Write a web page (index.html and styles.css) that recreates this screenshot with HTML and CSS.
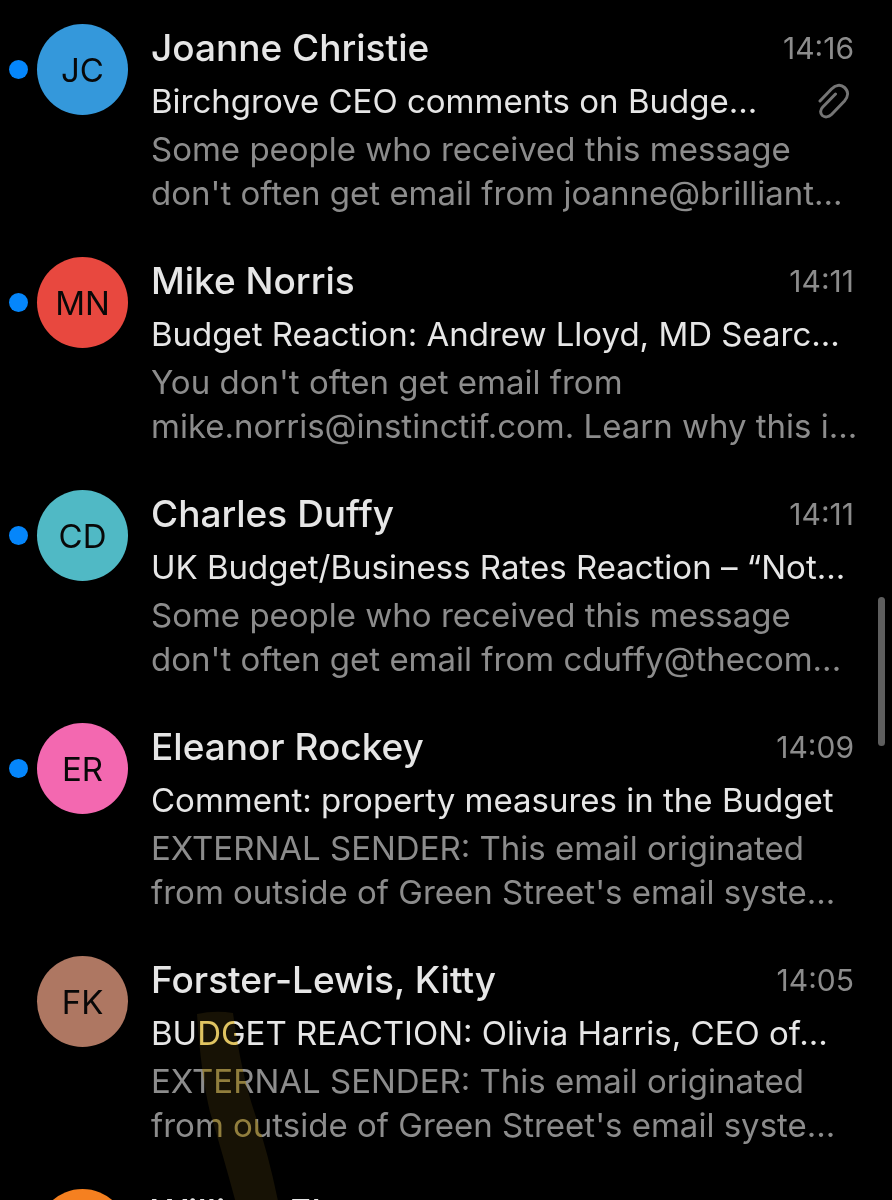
FILE: index.html
```html
<!DOCTYPE html>
<html lang="en">
<head>
<meta charset="utf-8">
<meta name="viewport" content="width=device-width, initial-scale=1">
<title>Inbox</title>
<link rel="stylesheet" href="styles.css">
</head>
<body>
<main class="inbox">
  <ul class="messages">
    <li class="message">
      <span class="unread"></span>
      <span class="avatar avatar-blue">JC</span>
      <article class="body">
        <header class="top"><h2 class="sender">Joanne Christie</h2><time class="time">14:16</time></header>
        <div class="subject-row">
          <p class="subject">Birchgrove CEO comments on Budge...</p>
          <svg class="clip" viewBox="0 0 32 36" fill="none" stroke="currentColor" stroke-width="3" stroke-linecap="round" stroke-linejoin="round" aria-hidden="true"><path d="M2 18 13.500 6C17.500 2 22.500 1 26.500 4.500C31 8.500 30 14 26.500 18L13.500 31.500C10.500 34.500 6.500 34.500 4.300 32.500C1.800 30 2.300 26.500 4.800 24L17.500 11"/></svg>
        </div>
        <p class="preview">Some people who received this message<br>don't often get email from joanne@brilliant...</p>
      </article>
    </li>
    <li class="message">
      <span class="unread"></span>
      <span class="avatar avatar-red">MN</span>
      <article class="body">
        <header class="top"><h2 class="sender">Mike Norris</h2><time class="time">14:11</time></header>
        <div class="subject-row"><p class="subject">Budget Reaction: Andrew Lloyd, MD Searc...</p></div>
        <p class="preview">You don't often get email from<br>mike.norris@instinctif.com. Learn why this i...</p>
      </article>
    </li>
    <li class="message">
      <span class="unread"></span>
      <span class="avatar avatar-teal">CD</span>
      <article class="body">
        <header class="top"><h2 class="sender">Charles Duffy</h2><time class="time">14:11</time></header>
        <div class="subject-row"><p class="subject">UK Budget/Business Rates Reaction – “Not...</p></div>
        <p class="preview">Some people who received this message<br>don't often get email from cduffy@thecom...</p>
      </article>
    </li>
    <li class="message">
      <span class="unread"></span>
      <span class="avatar avatar-pink">ER</span>
      <article class="body">
        <header class="top"><h2 class="sender">Eleanor Rockey</h2><time class="time">14:09</time></header>
        <div class="subject-row"><p class="subject">Comment: property measures in the Budget</p></div>
        <p class="preview">EXTERNAL SENDER: This email originated<br>from outside of Green Street's email syste...</p>
      </article>
    </li>
    <li class="message">
      <span></span>
      <span class="avatar avatar-brown">FK</span>
      <article class="body">
        <header class="top"><h2 class="sender">Forster-Lewis, Kitty</h2><time class="time">14:05</time></header>
        <div class="subject-row"><p class="subject">BUDGET REACTION: Olivia Harris, CEO of...</p></div>
        <p class="preview">EXTERNAL SENDER: This email originated<br>from outside of Green Street's email syste...</p>
      </article>
      <svg class="marker marker-tint" viewBox="0 0 90 200" aria-hidden="true"><path d="M4 3Q22-1 40 2Q48 62 62 103Q77 148 87 200H45Q34 158 17 101Q8 64 4 3Z" fill="#f5d468"/></svg>
      <svg class="marker marker-glow" viewBox="0 0 90 200" aria-hidden="true"><path d="M4 3Q22-1 40 2Q48 62 62 103Q77 148 87 200H45Q34 158 17 101Q8 64 4 3Z" fill="#171205"/></svg>
    </li>
    <li class="message">
      <span></span>
      <span class="avatar avatar-orange"></span>
      <article class="body">
        <header class="top"><h2 class="sender">William El</h2></header>
      </article>
    </li>
  </ul>
  <div class="scroll-thumb"></div>
</main>
</body>
</html>
```

FILE: styles.css
```css
* {
  box-sizing: border-box;
  margin: 0;
  padding: 0;
}

body {
  background: #000;
  color: #e6e6e6;
  font-family: Inter, "Liberation Sans", sans-serif;
  overflow: hidden;
}

.inbox {
  position: relative;
  height: 100vh;
  overflow: hidden;
  padding: 24px 38px 0 9px;
}

.messages {
  display: flex;
  flex-direction: column;
  gap: 42px;
  list-style: none;
}

.message {
  position: relative;
  display: grid;
  grid-template-columns: 19px 91px minmax(0, 1fr);
  column-gap: 9px;
  align-items: start;
}

.unread {
  width: 19px;
  height: 19px;
  margin-top: 36px;
  border-radius: 50%;
  background: #0586fb;
}

.avatar {
  display: flex;
  align-items: center;
  justify-content: center;
  width: 91px;
  height: 91px;
  border-radius: 50%;
  color: #080808;
  font-size: 33px;
}

.avatar-blue { background: #3498db; }
.avatar-red { background: #e8483f; }
.avatar-teal { background: #50b9c5; }
.avatar-pink { background: #f368b0; }
.avatar-brown { background: #ae7762; }
.avatar-orange { background: #f58020; }

.body {
  padding-left: 14px;
  white-space: nowrap;
}

.top {
  display: flex;
  justify-content: space-between;
  margin-bottom: 7px;
  line-height: 48px;
}

.sender {
  font-size: 37px;
  font-weight: 500;
}

.time {
  color: #8c8c8c;
  font-size: 30px;
}

.subject-row {
  display: flex;
  align-items: center;
  justify-content: space-between;
  margin-bottom: 4px;
}

.subject {
  font-size: 33px;
  line-height: 44px;
}

.clip {
  width: 32px;
  height: 36px;
  margin-right: 4px;
  color: #757575;
}

.preview {
  color: #8c8c8c;
  font-size: 33px;
  line-height: 44px;
}

/* Highlighter stroke drawn over the message */
.marker {
  position: absolute;
  top: 55px;
  left: 184px;
  width: 90px;
  height: 200px;
  pointer-events: none;
}

.marker-tint { mix-blend-mode: multiply; }
.marker-glow { mix-blend-mode: screen; }

.scroll-thumb {
  position: absolute;
  top: 597px;
  right: 7px;
  width: 7px;
  height: 149px;
  border-radius: 4px;
  background: #5e5e5e;
}
```
